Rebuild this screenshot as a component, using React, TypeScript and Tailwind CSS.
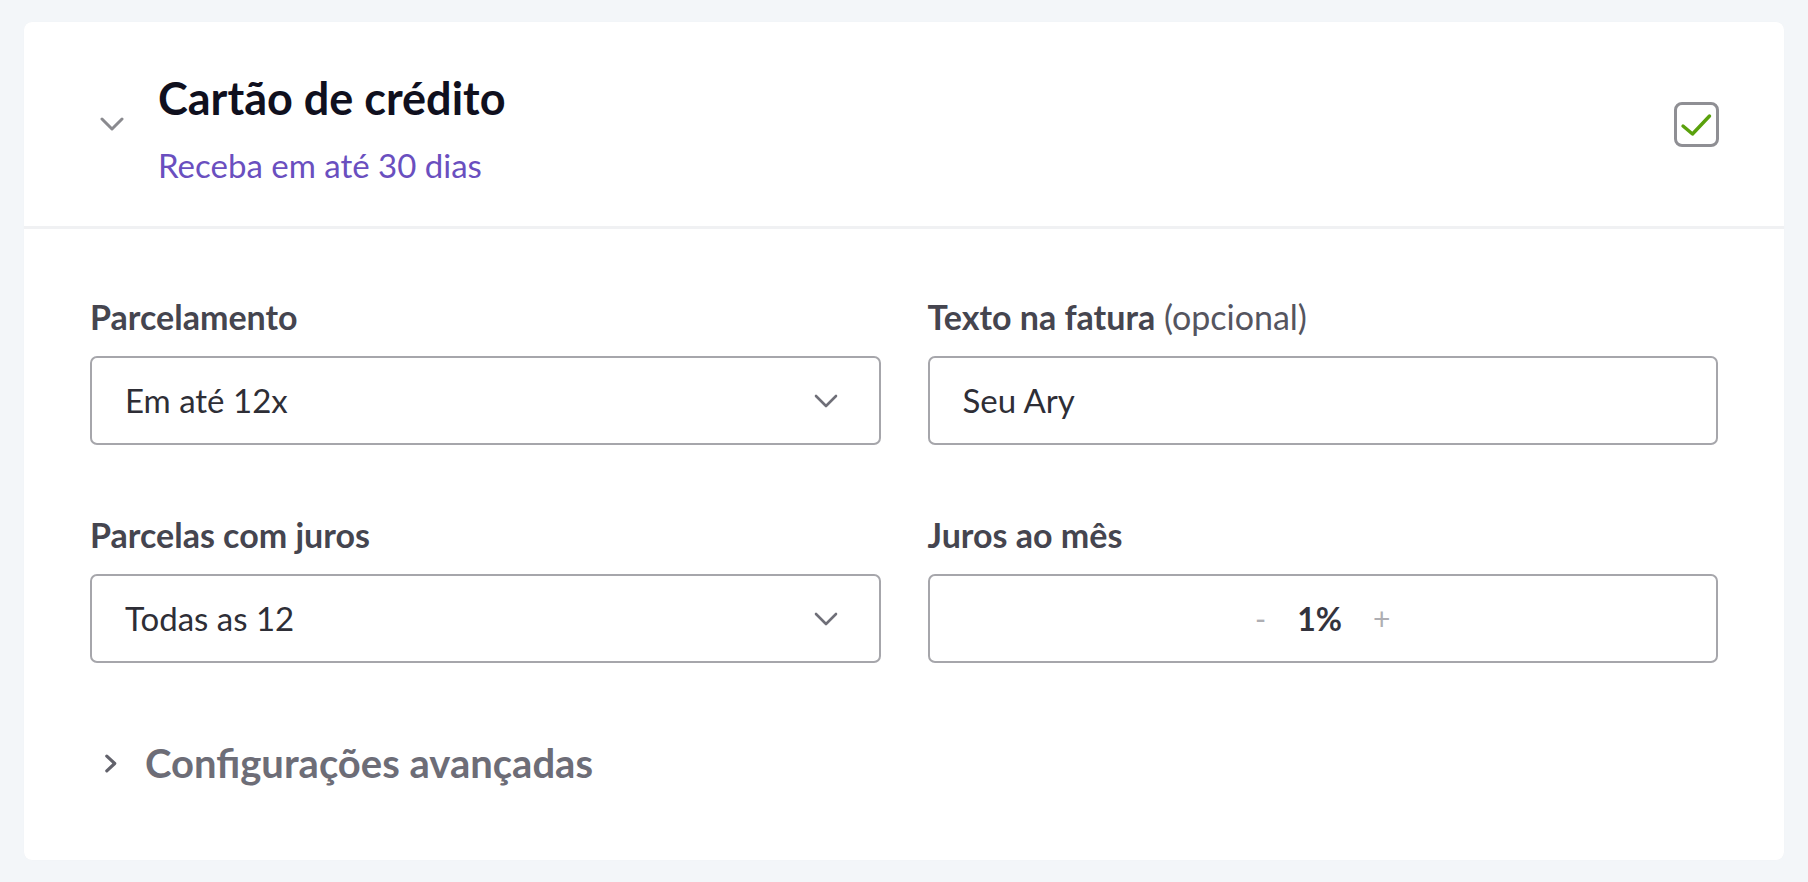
// App.tsx

function ChevronDown({ className = '', width = 2.6 }: { className?: string; width?: number }) {
  return (
    <svg viewBox="0 0 24 14" className={className} fill="none" stroke="currentColor" strokeWidth={width} strokeLinecap="round" strokeLinejoin="round">
      <path d="M2 2 L12 12 L22 2" />
    </svg>
  );
}

function ChevronRight({ className = '' }: { className?: string }) {
  return (
    <svg viewBox="0 0 12 18" className={className} fill="none" stroke="currentColor" strokeWidth="3" strokeLinecap="round" strokeLinejoin="round">
      <path d="M2.5 2 L10 9 L2.5 16" />
    </svg>
  );
}

function Field({ label, hint, children }: { label: string; hint?: string; children: React.ReactNode }) {
  return (
    <div className="flex flex-col gap-[23px]">
      <div className="text-[34px] leading-[32px] font-bold text-[#45454f] whitespace-nowrap">
        {label}
        {hint && <span className="font-normal text-[#55555f]"> {hint}</span>}
      </div>
      {children}
    </div>
  );
}

function SelectBox({ value }: { value: string }) {
  return (
    <div className="h-[89px] rounded-[7px] border-2 border-[#a6a6ab] flex items-center justify-between pl-[33px] pr-[41px]">
      <span className="text-[33px] text-[#2e2e36]">{value}</span>
      <ChevronDown className="w-[24px] h-[14px] text-[#6f6f78]" />
    </div>
  );
}

export default function App() {
  return (
    <div
      className="min-h-screen bg-[#f3f6f9] pt-[22px] px-[24px] pb-[23px]"
      style={{ fontFamily: 'Lato, "Noto Sans", sans-serif' }}
    >
      <div className="bg-white rounded-[8px] shadow-[0_0_1px_rgba(0,0,0,0.04)]">
        {/* Header */}
        <div className="h-[207px] border-b-[3px] border-[#f0f1f3] flex items-center pl-[76px] pr-[65px]">
          <ChevronDown className="w-[24px] h-[14px] text-[#8a8a8f] shrink-0" width={3} />
          <div className="ml-[34px] flex-1 pt-[9px]">
            <h1 className="text-[45px] leading-[48px] font-bold text-[#10101e]">Cartão de crédito</h1>
            <p className="mt-[25px] text-[33px] leading-[36px] text-[#6a4fbf]">Receba em até 30 dias</p>
          </div>
          <div className="w-[45px] h-[45px] rounded-[8px] border-[3px] border-[#8f8f94] flex items-center justify-center">
            <svg viewBox="0 0 45 45" className="w-[45px] h-[45px] shrink-0">
              <path d="M9 24 L18.5 32 L35.5 14" fill="none" stroke="#5aa10d" strokeWidth="3.4" strokeLinecap="round" strokeLinejoin="round" />
            </svg>
          </div>
        </div>

        {/* Body */}
        <div className="pt-[72px] pb-[75px] px-[66px]">
          <div className="grid grid-cols-2 gap-x-[47px] gap-y-[74px]">
            <Field label="Parcelamento">
              <SelectBox value="Em até 12x" />
            </Field>
            <Field label="Texto na fatura" hint="(opcional)">
              <div className="h-[89px] rounded-[7px] border-2 border-[#a6a6ab] flex items-center px-[33px]">
                <span className="text-[33px] text-[#2e2e36]">Seu Ary</span>
              </div>
            </Field>
            <Field label="Parcelas com juros">
              <SelectBox value="Todas as 12" />
            </Field>
            <Field label="Juros ao mês">
              <div className="h-[89px] rounded-[7px] border-2 border-[#a6a6ab] flex items-center justify-center gap-[31px]">
                <span className="text-[30px] text-[#aeaeb3]">-</span>
                <span className="text-[32px] font-bold text-[#33333d]">1%</span>
                <span className="text-[30px] text-[#aeaeb3]">+</span>
              </div>
            </Field>
          </div>

          <div className="mt-[78px] flex items-center gap-[28px] pl-[14px]">
            <ChevronRight className="w-[13px] h-[19px] text-[#62626b]" />
            <span className="text-[40px] leading-[44px] font-bold text-[#6d6d77]">Configurações avançadas</span>
          </div>
        </div>
      </div>
    </div>
  );
}
